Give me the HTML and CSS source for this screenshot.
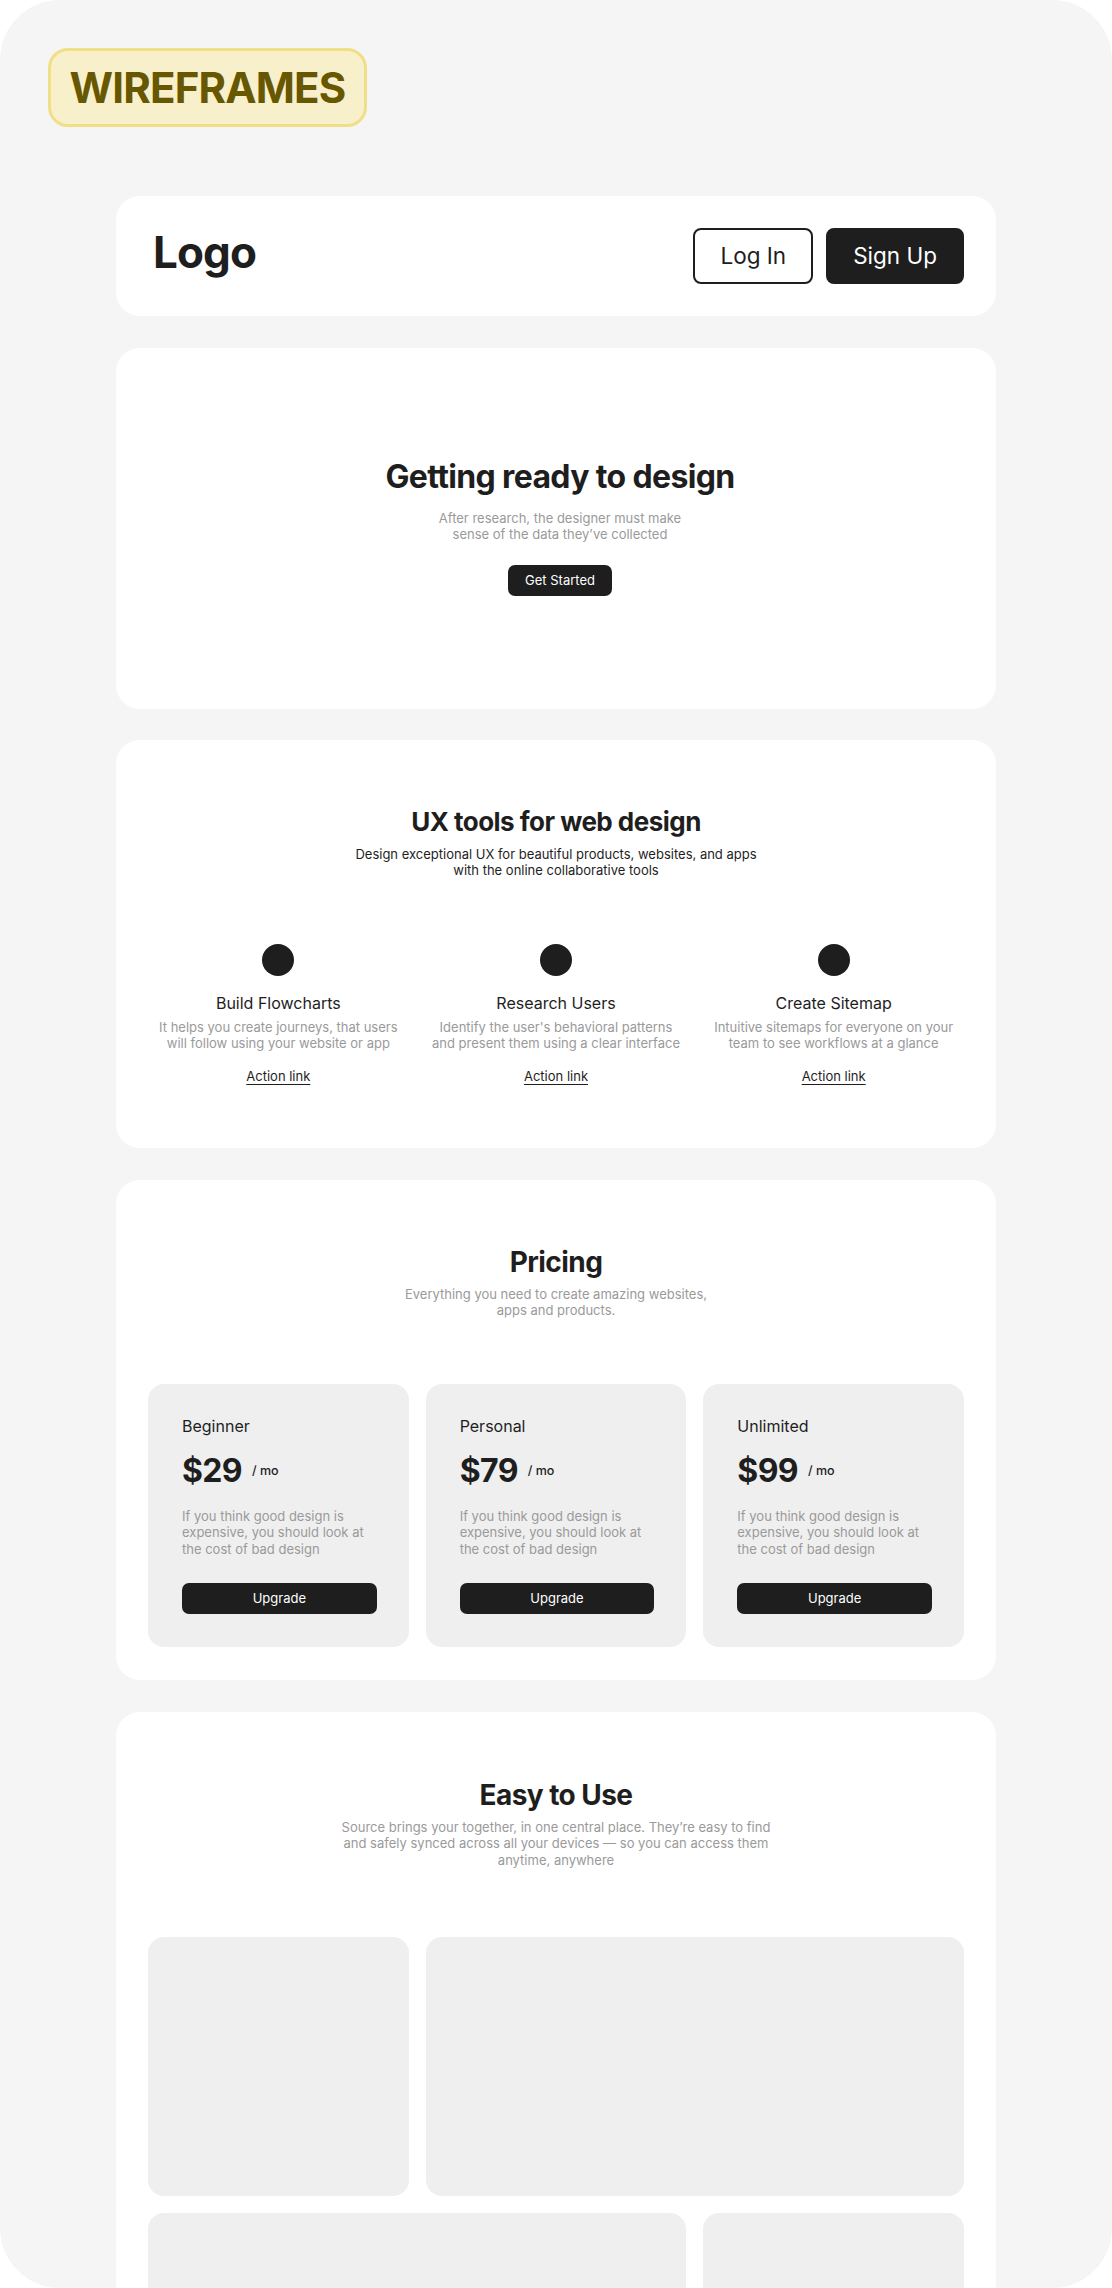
FILE: index.html
```html
<!DOCTYPE html>
<html lang="en">
<head>
<meta charset="utf-8">
<title>Wireframes</title>
<link rel="stylesheet" href="styles.css">
</head>
<body>
<div class="frame">
  <div class="badge">WIREFRAMES</div>

  <main class="stack">
    <header class="card nav">
      <div class="logo">Logo</div>
      <div class="nav-actions">
        <button class="btn-lg btn-outline">Log In</button>
        <button class="btn-lg btn-dark">Sign Up</button>
      </div>
    </header>

    <section class="card hero">
      <h1 class="hero-title">Getting ready to design</h1>
      <p class="hero-sub">After research, the designer must make<br>sense of the data they’ve collected</p>
      <button class="btn-sm">Get Started</button>
    </section>

    <section class="card features">
      <h2 class="title-26">UX tools for web design</h2>
      <p class="features-sub">Design exceptional UX for beautiful products, websites, and apps<br>with the online collaborative tools</p>
      <div class="grid3 feature-grid">
        <div class="feature">
          <span class="dot"></span>
          <h3 class="feature-title">Build Flowcharts</h3>
          <p class="feature-text">It helps you create journeys, that users<br>will follow using your website or app</p>
          <a class="action" href="#">Action link</a>
        </div>
        <div class="feature">
          <span class="dot"></span>
          <h3 class="feature-title">Research Users</h3>
          <p class="feature-text">Identify the user's behavioral patterns<br>and present them using a clear interface</p>
          <a class="action" href="#">Action link</a>
        </div>
        <div class="feature">
          <span class="dot"></span>
          <h3 class="feature-title">Create Sitemap</h3>
          <p class="feature-text">Intuitive sitemaps for everyone on your<br>team to see workflows at a glance</p>
          <a class="action" href="#">Action link</a>
        </div>
      </div>
    </section>

    <section class="card pricing">
      <h2 class="title-28">Pricing</h2>
      <p class="section-sub">Everything you need to create amazing websites,<br>apps and products.</p>
      <div class="grid3 plans">
        <div class="plan">
          <div class="plan-name">Beginner</div>
          <div class="plan-price"><span class="amount">$29</span><span class="per">/ mo</span></div>
          <p class="plan-text">If you think good design is<br>expensive, you should look at<br>the cost of bad design</p>
          <button class="btn-sm btn-block">Upgrade</button>
        </div>
        <div class="plan">
          <div class="plan-name">Personal</div>
          <div class="plan-price"><span class="amount">$79</span><span class="per">/ mo</span></div>
          <p class="plan-text">If you think good design is<br>expensive, you should look at<br>the cost of bad design</p>
          <button class="btn-sm btn-block">Upgrade</button>
        </div>
        <div class="plan">
          <div class="plan-name">Unlimited</div>
          <div class="plan-price"><span class="amount">$99</span><span class="per">/ mo</span></div>
          <p class="plan-text">If you think good design is<br>expensive, you should look at<br>the cost of bad design</p>
          <button class="btn-sm btn-block">Upgrade</button>
        </div>
      </div>
    </section>

    <section class="card easy">
      <h2 class="title-28">Easy to Use</h2>
      <p class="section-sub">Source brings your together, in one central place. They’re easy to find<br>and safely synced across all your devices — so you can access them<br>anytime, anywhere</p>
      <div class="grid3 tiles">
        <div class="tile"></div>
        <div class="tile span2"></div>
        <div class="tile span2"></div>
        <div class="tile"></div>
      </div>
    </section>
  </main>
</div>
</body>
</html>
```

FILE: styles.css
```css
* { box-sizing: border-box; }

html, body {
  margin: 0;
  padding: 0;
  background: #ffffff;
}

body {
  font-family: Inter, "Noto Sans", "Liberation Sans", sans-serif;
  color: #1e1e1e;
}

h1, h2, h3, p { margin: 0; }

button {
  font-family: inherit;
  cursor: pointer;
}

.frame {
  width: 1112px;
  height: 2288px;
  background: #f5f5f5;
  border-radius: 60px;
  overflow: hidden;
  padding: 48px 48px 0;
  display: flex;
  flex-direction: column;
  align-items: flex-start;
}

.badge {
  flex-shrink: 0;
  width: 319px;
  height: 79px;
  display: flex;
  align-items: center;
  justify-content: center;
  background: #f8f0cb;
  border: 3px solid #f1df88;
  border-radius: 20px;
  color: #675700;
  font-size: 42px;
  font-weight: 700;
  letter-spacing: -0.02em;
  line-height: 1;
}

.stack {
  flex-shrink: 0;
  align-self: stretch;
  margin: 69px 68px 0;
  display: flex;
  flex-direction: column;
  gap: 31.5px;
}

.card {
  background: #ffffff;
  border-radius: 24px;
  flex-shrink: 0;
}

/* nav */
.nav {
  height: 120px;
  padding: 0 32px 0 37px;
  display: flex;
  align-items: center;
  justify-content: space-between;
}

.logo {
  font-size: 44px;
  font-weight: 700;
  letter-spacing: -0.02em;
  line-height: 1;
  margin-bottom: 8px;
}

.nav-actions {
  display: flex;
  gap: 13px;
}

.btn-lg {
  height: 56px;
  padding: 0 25px;
  border: 2px solid #1e1e1e;
  border-radius: 8px;
  font-size: 22.5px;
  font-weight: 400;
  line-height: 1;
}

.btn-outline {
  background: #ffffff;
  color: #1e1e1e;
}

.btn-dark {
  background: #1e1e1e;
  color: #ffffff;
}

.btn-sm {
  height: 31px;
  padding: 0 17px;
  border: 0;
  border-radius: 7px;
  background: #1e1e1e;
  color: #ffffff;
  font-size: 13px;
  font-weight: 400;
  line-height: 1;
}

.btn-block {
  width: 100%;
}

/* hero */
.hero {
  height: 361px;
  display: flex;
  flex-direction: column;
  align-items: center;
  justify-content: center;
  text-align: center;
  padding: 0 0 2px 8px;
}

.hero-title {
  font-size: 32px;
  line-height: 38px;
  font-weight: 700;
  letter-spacing: -0.02em;
}

.hero-sub {
  margin-top: 14px;
  font-size: 13px;
  line-height: 16px;
  color: #9a9a9a;
}

.hero .btn-sm {
  margin-top: 23px;
}

/* section headings */
.title-26 {
  font-size: 26px;
  line-height: 32px;
  font-weight: 700;
  letter-spacing: -0.02em;
  text-align: center;
}

.title-28 {
  font-size: 28px;
  line-height: 34px;
  font-weight: 700;
  letter-spacing: -0.02em;
  text-align: center;
}

.section-sub {
  margin-top: 7px;
  font-size: 13px;
  line-height: 16.5px;
  color: #9a9a9a;
  text-align: center;
}

.grid3 {
  display: grid;
  grid-template-columns: repeat(3, 1fr);
  gap: 17px;
}

/* features */
.features {
  padding: 66px 32px 64px;
}

.features-sub {
  margin-top: 8px;
  font-size: 13px;
  line-height: 16px;
  color: #1e1e1e;
  text-align: center;
}

.feature-grid {
  margin-top: 66px;
}

.feature {
  display: flex;
  flex-direction: column;
  align-items: center;
  text-align: center;
}

.dot {
  width: 32px;
  height: 32px;
  border-radius: 50%;
  background: #1e1e1e;
}

.feature-title {
  margin-top: 17px;
  font-size: 16px;
  line-height: 20px;
  font-weight: 400;
}

.feature-text {
  margin-top: 6px;
  font-size: 13px;
  line-height: 16px;
  color: #9a9a9a;
}

.action {
  margin-top: 17px;
  font-size: 13px;
  line-height: 16px;
  color: #1e1e1e;
  text-decoration: underline;
  text-underline-offset: 3px;
}

/* pricing */
.pricing {
  padding: 65px 32px 33px;
}

.plans {
  margin-top: 65px;
}

.plan {
  background: #efefef;
  border-radius: 16px;
  padding: 32px 32px 33px 34px;
}

.plan-name {
  font-size: 16px;
  line-height: 20px;
}

.plan-price {
  margin-top: 16px;
  display: flex;
  align-items: center;
  gap: 10px;
}

.amount {
  font-size: 32px;
  line-height: 38px;
  font-weight: 700;
  letter-spacing: -0.02em;
}

.per {
  font-size: 12.5px;
  font-weight: 500;
  line-height: 16px;
}

.plan-text {
  margin-top: 18px;
  font-size: 13px;
  line-height: 16.5px;
  color: #9a9a9a;
}

.plan .btn-block {
  margin-top: 26px;
}

/* easy to use */
.easy {
  padding: 66px 32px 32px;
}

.tiles {
  margin-top: 69px;
}

.tile {
  height: 259px;
  background: #efefef;
  border-radius: 16px;
}

.span2 {
  grid-column: span 2;
}
```
